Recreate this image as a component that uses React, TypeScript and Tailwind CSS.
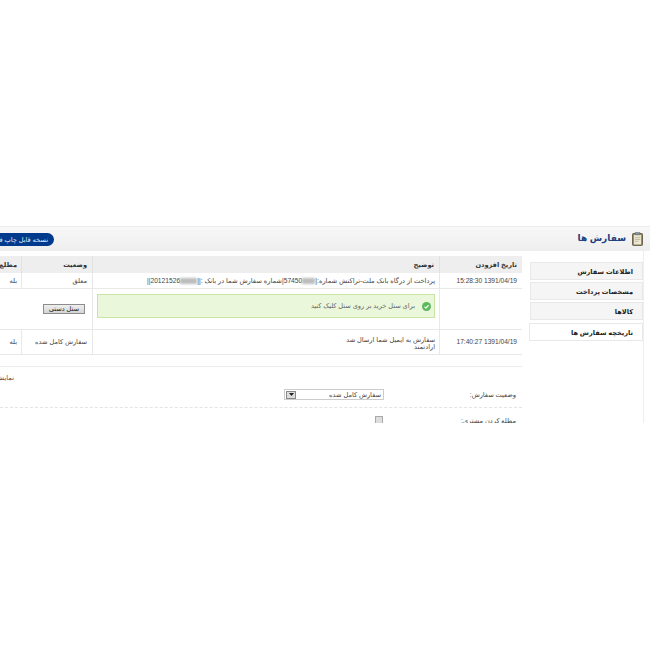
function ClipboardIcon() {
  return (
    <svg className="w-[11px] h-[14px]" viewBox="0 0 12 15">
      <rect x="0.5" y="1.5" width="11" height="13" rx="1" fill="#8f7d4e" stroke="#5f5a44" />
      <rect x="2" y="3" width="8" height="10.5" fill="#ece8d2" />
      <rect x="3.5" y="0" width="5" height="3" rx="0.5" fill="#8b979c" stroke="#4f5b60" strokeWidth="0.5" />
      <path d="M3 6h6M3 8h6M3 10h4" stroke="#b2ae92" strokeWidth="0.8" />
    </svg>
  );
}

function Blur({ w }: { w: number }) {
  return <span className="inline-block h-[6px] align-middle bg-[#bdbdbd] blur-[1px]" style={{ width: w }} />;
}

const tabs = ['اطلاعات سفارش', 'مشخصات پرداخت', 'کالاها', 'تاریخچه سفارش ها'];

export default function App() {
  return (
    <div dir="rtl" className="w-[650px] h-[650px] overflow-hidden bg-white text-[6.6px] text-[#444] font-['Liberation_Sans','DejaVu_Sans',sans-serif]">
      <div className="h-[226px]" />

      {/* Title bar */}
      <div className="h-[25px] flex items-center justify-between border-t border-[#ececec] bg-gradient-to-b from-[#f8f8f8] to-[#eeeeee] pr-[7px]">
        <div className="flex items-center gap-[6px]">
          <ClipboardIcon />
          <span className="text-[9px] font-bold text-[#1c3f7c]">سفارش ها</span>
        </div>
        <div className="w-[100px] h-[13px] -ml-[46px] rounded-full bg-[#003a8c] text-[#e8eef8] pr-[6px] leading-[13px] whitespace-nowrap overflow-hidden">
          نسخه قابل چاپ فاکتور
        </div>
      </div>

      <div className="flex h-[172px] w-[644px] mr-[6px] border-r border-[#eeeeee] overflow-hidden">
        {/* Side tabs */}
        <div className="w-[121px] shrink-0 pt-[11px] flex flex-col gap-[2px]">
          {tabs.map((t, i) => (
            <div
              key={t}
              className={`h-[18px] pr-[9px] leading-[17px] font-bold text-[#222] whitespace-nowrap border border-[#e8e8e8] ${i === 3 ? 'mt-[1px] w-[114px] bg-white' : 'w-[113px] bg-[#f5f5f5]'}`}
            >
              {t}
            </div>
          ))}
        </div>

        {/* Main */}
        <div className="w-[600px] shrink-0 pt-[5px]">
          <div className="grid grid-cols-[83px_347px_71px_60px] border-b border-[#e8e8e8] whitespace-nowrap">
            <div className="h-[17px] bg-[#eeeeee] font-bold text-[#333] pr-[5px] leading-[17px] border-l border-[#e2e2e2]">تاریخ افزودن</div>
            <div className="h-[17px] bg-[#eeeeee] font-bold text-[#333] pr-[5px] leading-[17px] border-l border-[#e2e2e2]">توضیح</div>
            <div className="h-[17px] bg-[#eeeeee] font-bold text-[#333] pr-[5px] leading-[17px] border-l border-[#e2e2e2]">وضعیت</div>
            <div className="h-[17px] bg-[#eeeeee] font-bold text-[#333] pr-[4px] leading-[17px]">مطلع</div>

            <div className="h-[16px] pr-[5px] leading-[16px] border-l border-b border-[#e8e8e8]">1391/04/19 15:28:30</div>
            <div className="h-[16px] pr-[4px] leading-[16px] text-[6.7px] border-l border-b border-[#e8e8e8]">
              پرداخت از درگاه بانک ملت-تراکنش شماره:|<Blur w={13} />57450|شماره سفارش شما در بانک :||<Blur w={17} />20121526||
            </div>
            <div className="h-[16px] pr-[5px] leading-[16px] border-l border-b border-[#e8e8e8]">معلق</div>
            <div className="h-[16px] pr-[4px] leading-[16px] border-b border-[#e8e8e8]">بله</div>

            <div className="h-[41px] border-l border-b border-[#e8e8e8]" />
            <div className="h-[41px] px-[4px] pt-[5px] border-l border-b border-[#e8e8e8]">
              <div className="h-[24px] flex items-center gap-[7px] pr-[3px] bg-[#ebf7da] border border-[#c9e5a5] text-[#666]">
                <svg className="w-[9px] h-[9px]" viewBox="0 0 10 10">
                  <circle cx="5" cy="5" r="5" fill="#5cb85c" />
                  <path d="M2.8 5.2 4.4 6.8 7.3 3.6" fill="none" stroke="#fff" strokeWidth="1.3" />
                </svg>
                <span>برای ستل خرید بر روی ستل کلیک کنید</span>
              </div>
            </div>
            <div className="col-span-2 h-[41px] flex items-center border-b border-[#e8e8e8]">
              <span className="mr-[7px] w-[42px] h-[10px] bg-gradient-to-b from-[#efefef] to-[#d4d4d4] border border-[#8c8c8c] leading-[8px] text-center text-[#222]">ستل دستی</span>
            </div>

            <div className="h-[24px] pr-[5px] leading-[24px] border-l border-[#e8e8e8]">1391/04/19 17:40:27</div>
            <div className="h-[24px] pr-[4px] pt-[6px] leading-[7px] border-l border-[#e8e8e8]">
              <div>سفارش به ایمیل شما ارسال شد</div>
              <div>ارادتمند</div>
            </div>
            <div className="h-[24px] pr-[5px] leading-[24px] border-l border-[#e8e8e8]">سفارش کامل شده</div>
            <div className="h-[24px] pr-[4px] leading-[24px]">بله</div>
          </div>

          {/* Form */}
          <div className="mt-[11px] border-t border-[#ececec] w-[522px] h-[22px] leading-[22px] whitespace-nowrap">
            <span className="block mr-[508px] text-[#7a3a2a]">نمایش فاکتور</span>
          </div>
          <div className="w-[522px] h-[20px] pt-[1px] flex items-start whitespace-nowrap border-b border-dashed border-[#e4e4e4]">
            <span className="w-[138px] pr-[6px] leading-[11px]">وضعیت سفارش:</span>
            <div className="w-[100px] h-[11px] border border-[#cccccc] flex items-center justify-between pr-[2px] pl-[1px] leading-[9px]">
              <span>سفارش کامل شده</span>
              <span className="w-[10px] h-[8px] bg-[#dddddd] border border-[#888888] flex items-center justify-center">
                <svg className="w-[5px] h-[3px]" viewBox="0 0 5 3"><path d="M0 0h5L2.5 3z" fill="#222" /></svg>
              </span>
            </div>
          </div>
          <div className="w-[522px] pt-[8px] flex items-start whitespace-nowrap">
            <span className="w-[139px] pr-[6px] leading-[10px]">مطلع کردن مشتری:</span>
            <span className="w-[8px] h-[8px] bg-[#dddddd] border border-[#aaaaaa]" />
          </div>
        </div>
      </div>
    </div>
  );
}
